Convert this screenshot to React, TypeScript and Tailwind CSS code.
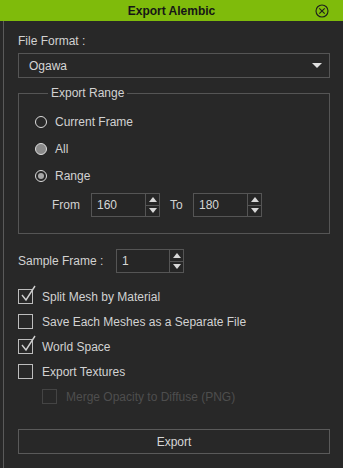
import React from "react";

function Spinner({ value, width }: { value: string; width: string }) {
  return (
    <div className={`flex h-[24px] ${width} border border-[#555] bg-[#262626]`}>
      <div className="flex flex-1 items-center pl-[5px] text-[12px] text-[#d6d6d6]">{value}</div>
      <div className="flex w-[14px] flex-col border-l border-[#555]">
        <div className="flex flex-1 items-center justify-center border-b border-[#555]">
          <div className="h-0 w-0 border-x-[4px] border-b-[5px] border-x-transparent border-b-[#d8d8d8]" />
        </div>
        <div className="flex flex-1 items-center justify-center">
          <div className="h-0 w-0 border-x-[4px] border-t-[5px] border-x-transparent border-t-[#d8d8d8]" />
        </div>
      </div>
    </div>
  );
}

function Radio({ label, state }: { label: string; state: "off" | "fill" | "dot" }) {
  return (
    <div className="flex h-[27px] items-center gap-[8px]">
      <div
        className={`flex h-[12px] w-[12px] items-center justify-center rounded-full border-[1.5px] border-[#dcdcdc] ${
          state === "fill" ? "bg-[#8a8a8a]" : "bg-transparent"
        }`}
      >
        {state === "dot" && <div className="h-[6px] w-[6px] rounded-full bg-[#a8a8a8]" />}
      </div>
      <span className="text-[12px] text-[#d2d2d2]">{label}</span>
    </div>
  );
}

function Check({ label, checked, disabled, indent }: { label: string; checked?: boolean; disabled?: boolean; indent?: boolean }) {
  return (
    <div className={`flex h-[25px] items-center gap-[9px] ${indent ? "pl-[24px]" : ""}`}>
      <div className={`relative h-[15px] w-[15px] border ${disabled ? "border-[#444]" : "border-[#bdbdbd]"}`}>
        {checked && (
          <svg className="absolute -top-[6px] left-[1px]" width="17" height="19" viewBox="0 0 17 19" fill="none">
            <path d="M2 11 L6 16 L15 2" stroke="#d0d0d0" strokeWidth="1.4" />
          </svg>
        )}
      </div>
      <span className={`text-[12px] ${disabled ? "text-[#4e4e4e]" : "text-[#d2d2d2]"}`}>{label}</span>
    </div>
  );
}

export default function App() {
  return (
    <div className="h-[468px] w-[343px] bg-[#282828]" style={{ fontFamily: '"Liberation Sans", Arial, sans-serif' }}>
      <div className="relative flex h-[21px] items-center justify-center bg-[#7fbb0b]">
        <span className="text-[12px] font-bold text-[#161616]">Export Alembic</span>
        <svg className="absolute right-[14px] top-[4px]" width="14" height="14" viewBox="0 0 14 14" fill="none">
          <circle cx="7" cy="7" r="6" stroke="#1e1e1e" strokeWidth="1.1" />
          <path d="M4.3 4.3 L9.7 9.7 M9.7 4.3 L4.3 9.7" stroke="#1e1e1e" strokeWidth="1.1" />
        </svg>
      </div>
      <div className="ml-[3px] h-[447px] border-l border-[#5a5a5a] pl-[14px] pr-[13px]">
        <div className="pt-[12px] text-[12px] leading-[16px] text-[#d2d2d2]">File Format :</div>
        <div className="mt-[4px] flex h-[25px] items-center justify-between border border-[#555] pl-[10px] pr-[7px]">
          <span className="text-[12px] text-[#d6d6d6]">Ogawa</span>
          <div className="h-0 w-0 border-x-[5px] border-t-[5px] border-x-transparent border-t-[#e0e0e0]" />
        </div>
        <fieldset className="mt-[7px] border border-[#555] pb-[16px] pl-[16px]">
          <legend className="ml-[13px] px-[3px] text-[12px] leading-[16px] text-[#d2d2d2]">Export Range</legend>
          <div className="pt-[7px]">
            <Radio label="Current Frame" state="off" />
            <Radio label="All" state="fill" />
            <Radio label="Range" state="dot" />
          </div>
          <div className="mt-[4px] flex items-center pl-[17px]">
            <span className="w-[39px] text-[12px] text-[#d2d2d2]">From</span>
            <Spinner value="160" width="w-[69px]" />
            <span className="ml-[10px] w-[23px] text-[12px] text-[#d2d2d2]">To</span>
            <Spinner value="180" width="w-[69px]" />
          </div>
        </fieldset>
        <div className="mt-[15px] flex items-center">
          <span className="w-[98px] text-[12px] text-[#d2d2d2]">Sample Frame :</span>
          <Spinner value="1" width="w-[68px]" />
        </div>
        <div className="mt-[11px]">
          <Check label="Split Mesh by Material" checked />
          <Check label="Save Each Meshes as a Separate File" />
          <Check label="World Space" checked />
          <Check label="Export Textures" />
          <Check label="Merge Opacity to Diffuse (PNG)" disabled indent />
        </div>
        <div className="mt-[20px] flex h-[25px] items-center justify-center border border-[#5a5a5a]">
          <span className="text-[12px] text-[#d6d6d6]">Export</span>
        </div>
      </div>
    </div>
  );
}
